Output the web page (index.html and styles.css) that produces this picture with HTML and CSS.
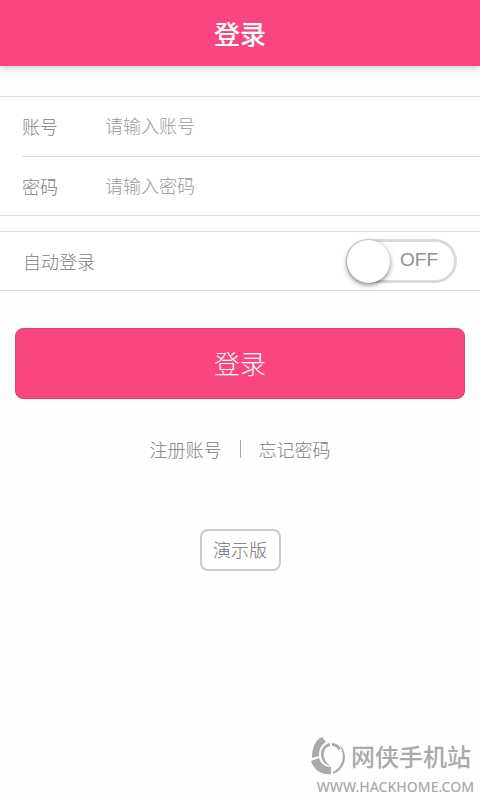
FILE: index.html
```html
<!DOCTYPE html>
<html lang="zh-CN">
<head>
<meta charset="utf-8">
<meta name="viewport" content="width=device-width, initial-scale=1">
<title>登录</title>
<link rel="stylesheet" href="styles.css">
</head>
<body>
<header class="bar"><h1>登录</h1></header>
<main>
  <form class="login">
    <div class="group">
      <div class="row">
        <label for="account">账号</label>
        <input class="field" id="account" type="text" placeholder="请输入账号">
      </div>
      <div class="row">
        <label for="password">密码</label>
        <input class="field" id="password" type="password" placeholder="请输入密码">
      </div>
    </div>
    <div class="group auto">
      <label for="auto">自动登录</label>
      <label class="switch">
        <input id="auto" type="checkbox" role="switch">
        <span class="knob"></span>
        <span class="state">OFF</span>
      </label>
    </div>
    <button class="submit" type="submit">登录</button>
  </form>
  <nav class="links">
    <a href="#register">注册账号</a>
    <span class="divider"></span>
    <a href="#forgot">忘记密码</a>
  </nav>
  <button class="demo" type="button">演示版</button>
</main>
<footer class="mark">
  <div class="brand">
    <svg class="logo" viewBox="0 0 36 40" aria-hidden="true">
      <path d="M12 1 16 6C11 9 9 13 9 20L2 22C2 12 5 4 12 1Z"/>
      <path d="M1 25 9 22C11 28 15 31 21 31V38C11 39 4 34 1 25Z"/>
      <path d="M20 7V10C15 11 13 16 14 21C15 25 17 28 21 30C14 29 11 24 11 18C11 12 15 8 20 7Z"/>
      <path d="M22 7C26 7 29 9 31 13L28 14C27 11 25 10 22 10Z"/>
      <path d="M29 8C39 17 36 33 23 38V36C33 31 36 19 29 8Z"/>
    </svg>
    <span class="name">网侠手机站</span>
  </div>
  <span class="url">WWW.HACKHOME.COM</span>
</footer>
</body>
</html>
```
FILE: styles.css
```css
* {
  box-sizing: border-box;
}

body {
  margin: 0;
  min-height: 100vh;
  display: flex;
  flex-direction: column;
  background: #fefefe;
  color: #808080;
  font: 300 18px/26px "Noto Sans CJK SC", sans-serif;
}

button,
input {
  font: inherit;
}

.bar {
  height: 66px;
  display: flex;
  align-items: center;
  justify-content: center;
  background: #f9467f;
  color: #fff;
  box-shadow: 0 1px 8px rgba(0, 0, 0, 0.25);
}

.bar h1 {
  margin: 0;
  font-size: 26px;
  line-height: 38px;
  font-weight: 500;
}

main {
  display: flex;
  flex-direction: column;
  align-items: center;
}

.login {
  width: 100%;
  padding-top: 30px;
}

.group {
  border: solid #dcdcdc;
  border-width: 1px 0;
  background: #fff;
}

.row {
  height: 59px;
  margin-left: 22px;
  padding-bottom: 3px;
  display: flex;
  align-items: center;
}

.row + .row {
  border-top: 1px solid #dcdcdc;
}

.row label {
  width: 83px;
  padding-top: 2px;
}

.field {
  flex: 1;
  min-width: 0;
  border: 0;
  padding: 0;
  background: none;
  outline: 0;
  color: #666;
}

.field::placeholder {
  color: #999;
  opacity: 1;
}

.auto {
  height: 60px;
  margin-top: 15px;
  padding: 0 23px;
  display: flex;
  align-items: center;
  justify-content: space-between;
}

.switch {
  position: relative;
  width: 111px;
  height: 44px;
  border: 3px solid #dadada;
  border-radius: 22px;
  background: #fff;
}

.switch input {
  position: absolute;
  inset: 0;
  margin: 0;
  opacity: 0;
}

.knob {
  position: absolute;
  top: -2px;
  left: -2px;
  width: 43px;
  height: 43px;
  border-radius: 50%;
  background: #fff;
  box-shadow: 0 2px 5px rgba(0, 0, 0, 0.5);
}

.state {
  display: block;
  padding-right: 16px;
  text-align: right;
  font: 19px/36px "Liberation Sans", sans-serif;
  color: #909090;
}

.submit {
  display: block;
  width: calc(100% - 30px);
  height: 71px;
  margin: 37px 15px 0;
  padding: 0 0 2px;
  border: 1px solid #ec3f76;
  border-radius: 8px;
  background: #f9467f;
  color: #fff;
  font-size: 26px;
}

.links {
  margin-top: 37px;
  display: flex;
  align-items: center;
  gap: 18px;
}

.links a {
  color: inherit;
  text-decoration: none;
}

.divider {
  width: 1px;
  height: 18px;
  background: #aaa;
}

.demo {
  margin: 67px 0 20px;
  width: 81px;
  height: 42px;
  padding: 0 0 2px;
  border: 2px solid #ccc;
  border-radius: 8px;
  background: #fff;
  color: #707070;
}

.mark {
  margin-top: auto;
  padding: 0 6px 2px 0;
  align-self: flex-end;
  display: flex;
  flex-direction: column;
  align-items: flex-end;
  color: #aaa;
}

.brand {
  margin-right: 3px;
  display: flex;
  align-items: center;
  gap: 5px;
}

.logo {
  width: 36px;
  height: 40px;
  fill: #aaa;
}

.name {
  font-size: 24px;
  line-height: 36px;
  font-weight: 500;
}

.url {
  font: 500 14px/22px "Noto Sans", sans-serif;
}
```
